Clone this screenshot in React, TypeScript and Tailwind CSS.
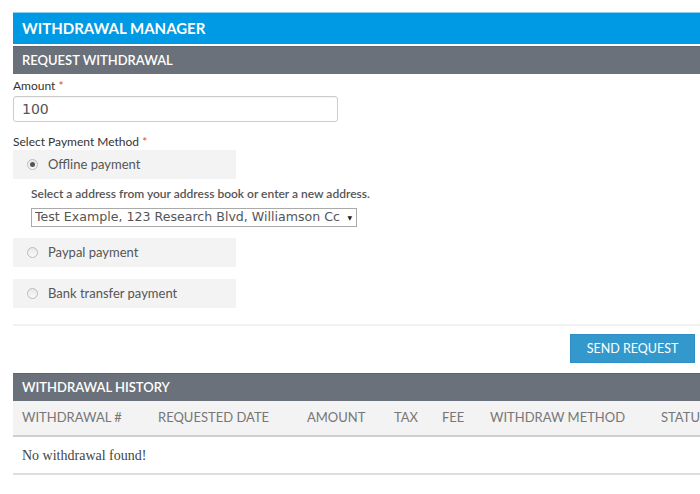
import React from "react";

const sans = "font-['Lato','Open_Sans',sans-serif]";

function Radio({ checked }: { checked?: boolean }) {
  return (
    <span className="flex h-[11px] w-[11px] items-center justify-center rounded-full border border-[#bbb] bg-gradient-to-b from-[#e8e8e8] to-[#fafafa]">
      {checked && <span className="h-[5px] w-[5px] rounded-full bg-[#555]" />}
    </span>
  );
}

function Option({ label, checked }: { label: string; checked?: boolean }) {
  return (
    <div className="flex h-[29px] w-[223px] items-center gap-[10px] bg-[#f3f3f3] pl-[14px] text-[13px] text-[#555]">
      <Radio checked={checked} />
      <span>{label}</span>
    </div>
  );
}

const cols = [
  { label: "WITHDRAWAL #", w: "w-[136px]" },
  { label: "REQUESTED DATE", w: "w-[149px]" },
  { label: "AMOUNT", w: "w-[87px]" },
  { label: "TAX", w: "w-[48px]" },
  { label: "FEE", w: "w-[48px]" },
  { label: "WITHDRAW METHOD", w: "w-[171px]" },
  { label: "STATUS", w: "w-[80px]" },
];

export default function App() {
  return (
    <div className={`${sans} h-[494px] w-[700px] overflow-hidden bg-white pl-[13px]`}>
      <div className="mt-[12px] h-[32px] border-t border-[#8fd0f2] bg-[#0099e3] pl-[9px] text-[15px] leading-[31px] font-bold text-white">
        WITHDRAWAL MANAGER
      </div>
      <div className="mt-[2px] h-[28px] border-t border-[#5f646c] bg-[#6b717a] pl-[9px] text-[13px] leading-[27px] font-semibold text-white">
        REQUEST WITHDRAWAL
      </div>

      <div className="mt-[4px] text-[12px] leading-[15px] text-[#333]">
        Amount <span className="text-[#e04a4a]">*</span>
      </div>
      <div className="mt-[3px] flex h-[26px] w-[325px] items-center rounded-[3px] border border-[#ccc] pl-[8px] font-['DejaVu_Sans',sans-serif] text-[14px] text-[#555] shadow-[inset_0_1px_1px_rgba(0,0,0,0.05)]">
        100
      </div>

      <div className="mt-[12px] text-[12px] leading-[15px] text-[#333]">
        Select Payment Method <span className="text-[#e04a4a]">*</span>
      </div>
      <div className="mt-[1px]">
        <Option label="Offline payment" checked />
      </div>
      <div className="mt-[7px] pl-[18px] text-[12px] leading-[15px] font-semibold text-[#555]">
        Select a address from your address book or enter a new address.
      </div>
      <div className="mt-[7px] ml-[18px] flex h-[19px] w-[326px] items-center justify-between border border-[#aaa] pr-[4px] pl-[3px] font-['DejaVu_Sans',sans-serif] text-[12.6px] text-[#555]">
        <span className="overflow-hidden whitespace-nowrap">Test Example, 123 Research Blvd, Williamson Cc</span>
        <span className="text-[6px] text-[#222]">▼</span>
      </div>
      <div className="mt-[11px]">
        <Option label="Paypal payment" />
      </div>
      <div className="mt-[12px]">
        <Option label="Bank transfer payment" />
      </div>

      <div className="mt-[16px] h-[2px] bg-[#f2f2f2]" />

      <div className="mt-[8px] flex justify-end pr-[5px]">
        <div className="flex h-[29px] w-[125px] items-center justify-center border border-[#2f8fc4] bg-[#3399cc] pt-[2px] text-[12.5px] text-white">
          SEND REQUEST
        </div>
      </div>

      <div className="mt-[10px] h-[28px] border-t border-[#5f646c] bg-[#6b717a] pl-[9px] text-[13px] leading-[27px] font-semibold text-white">
        WITHDRAWAL HISTORY
      </div>
      <div className="flex h-[36px] items-center whitespace-nowrap border-b-2 border-[#cfcfcf] bg-[#f3f3f3] pl-[9px] text-[13px] text-[#777]">
        {cols.map((c) => (
          <div key={c.label} className={`${c.w} shrink-0`}>
            {c.label}
          </div>
        ))}
      </div>
      <div className="flex h-[38px] items-center border-b-2 border-[#dedede] pl-[9px] font-['Liberation_Serif',serif] text-[14px] text-[#444]">
        No withdrawal found!
      </div>
    </div>
  );
}
